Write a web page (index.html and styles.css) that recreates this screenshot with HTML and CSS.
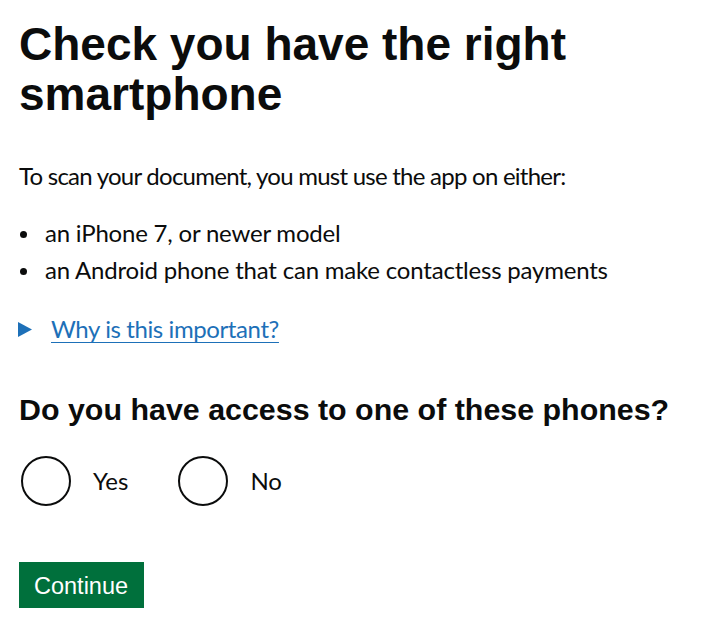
FILE: index.html
```html
<!DOCTYPE html>
<html lang="en">
<head>
<meta charset="utf-8">
<title>Check you have the right smartphone</title>
<link rel="stylesheet" href="styles.css">
</head>
<body>
<main class="page">
  <h1 class="heading-xl">Check you have the right smartphone</h1>
  <p class="body">To scan your document, you must use the app on either:</p>
  <ul class="bullets">
    <li>an iPhone 7, or newer model</li>
    <li>an Android phone that can make contactless payments</li>
  </ul>
  <div class="details">
    <svg class="details-arrow" width="14" height="15" viewBox="0 0 14 15" aria-hidden="true"><polygon points="0,0 14,7.5 0,15" fill="#1d70b8"/></svg>
    <a class="details-link" href="#">Why is this important?</a>
  </div>
  <fieldset class="question">
    <legend class="heading-m">Do you have access to one of these phones?</legend>
    <div class="radios">
      <label class="radio"><span class="radio-circle"></span><span class="radio-label">Yes</span></label>
      <label class="radio"><span class="radio-circle"></span><span class="radio-label">No</span></label>
    </div>
  </fieldset>
  <button class="button" type="button">Continue</button>
</main>
</body>
</html>
```
FILE: styles.css
```css
html, body {
  margin: 0;
  padding: 0;
  background: #ffffff;
  color: #0b0c0c;
}

.page {
  padding: 19px 19px 0 19px;
  display: flex;
  flex-direction: column;
  align-items: flex-start;
}

.heading-xl {
  font-family: "Liberation Sans", Arial, sans-serif;
  font-weight: 700;
  font-size: 46px;
  line-height: 50px;
  margin: 0 0 42px 0;
}

.body {
  font-family: Lato, "Noto Sans", sans-serif;
  font-size: 24px;
  line-height: 30px;
  letter-spacing: -0.75px;
  margin: 0 0 27px 0;
}

.bullets {
  list-style: none;
  margin: 0 0 22px 0;
  padding: 0;
  font-family: Lato, "Noto Sans", sans-serif;
  font-size: 24px;
  line-height: 30px;
  letter-spacing: -0.2px;
}

.bullets li {
  position: relative;
  padding-left: 26px;
  margin-bottom: 7px;
}

.bullets li::before {
  content: "";
  position: absolute;
  left: 1px;
  top: 13px;
  width: 7px;
  height: 7px;
  border-radius: 50%;
  background: #0b0c0c;
}

.details {
  display: flex;
  align-items: center;
  gap: 19px;
  font-family: Lato, "Noto Sans", sans-serif;
  font-size: 24px;
  line-height: 30px;
  letter-spacing: -0.4px;
  margin-bottom: 47px;
}

.details-arrow {
  display: block;
  margin-left: -1px;
}

.details-link {
  color: #1d70b8;
  text-decoration: underline;
  text-decoration-thickness: 1px;
  text-underline-offset: 4px;
}

.question {
  border: 0;
  margin: 0 0 56px 0;
  padding: 0;
  min-width: 0;
}

.heading-m {
  font-family: "Liberation Sans", Arial, sans-serif;
  font-weight: 700;
  font-size: 30.4px;
  line-height: 36px;
  padding: 0;
  margin: 0 0 29px 0;
}

.radios {
  display: flex;
  align-items: center;
  gap: 48px;
}

.radio {
  display: flex;
  align-items: center;
  gap: 22px;
  font-family: Lato, "Noto Sans", sans-serif;
  font-size: 24px;
  line-height: 30px;
}

.radio-circle {
  display: block;
  width: 46px;
  height: 46px;
  border: 2px solid #0b0c0c;
  border-radius: 50%;
  margin-left: 2px;
}

.button {
  font-family: "Liberation Sans", Arial, sans-serif;
  font-size: 23.5px;
  line-height: 27px;
  color: #ffffff;
  background: #00703c;
  border: 0;
  border-radius: 0;
  padding: 11px 16px 8px 15px;
  box-shadow: 0 3px 0 #002d18;
  cursor: pointer;
}
```
